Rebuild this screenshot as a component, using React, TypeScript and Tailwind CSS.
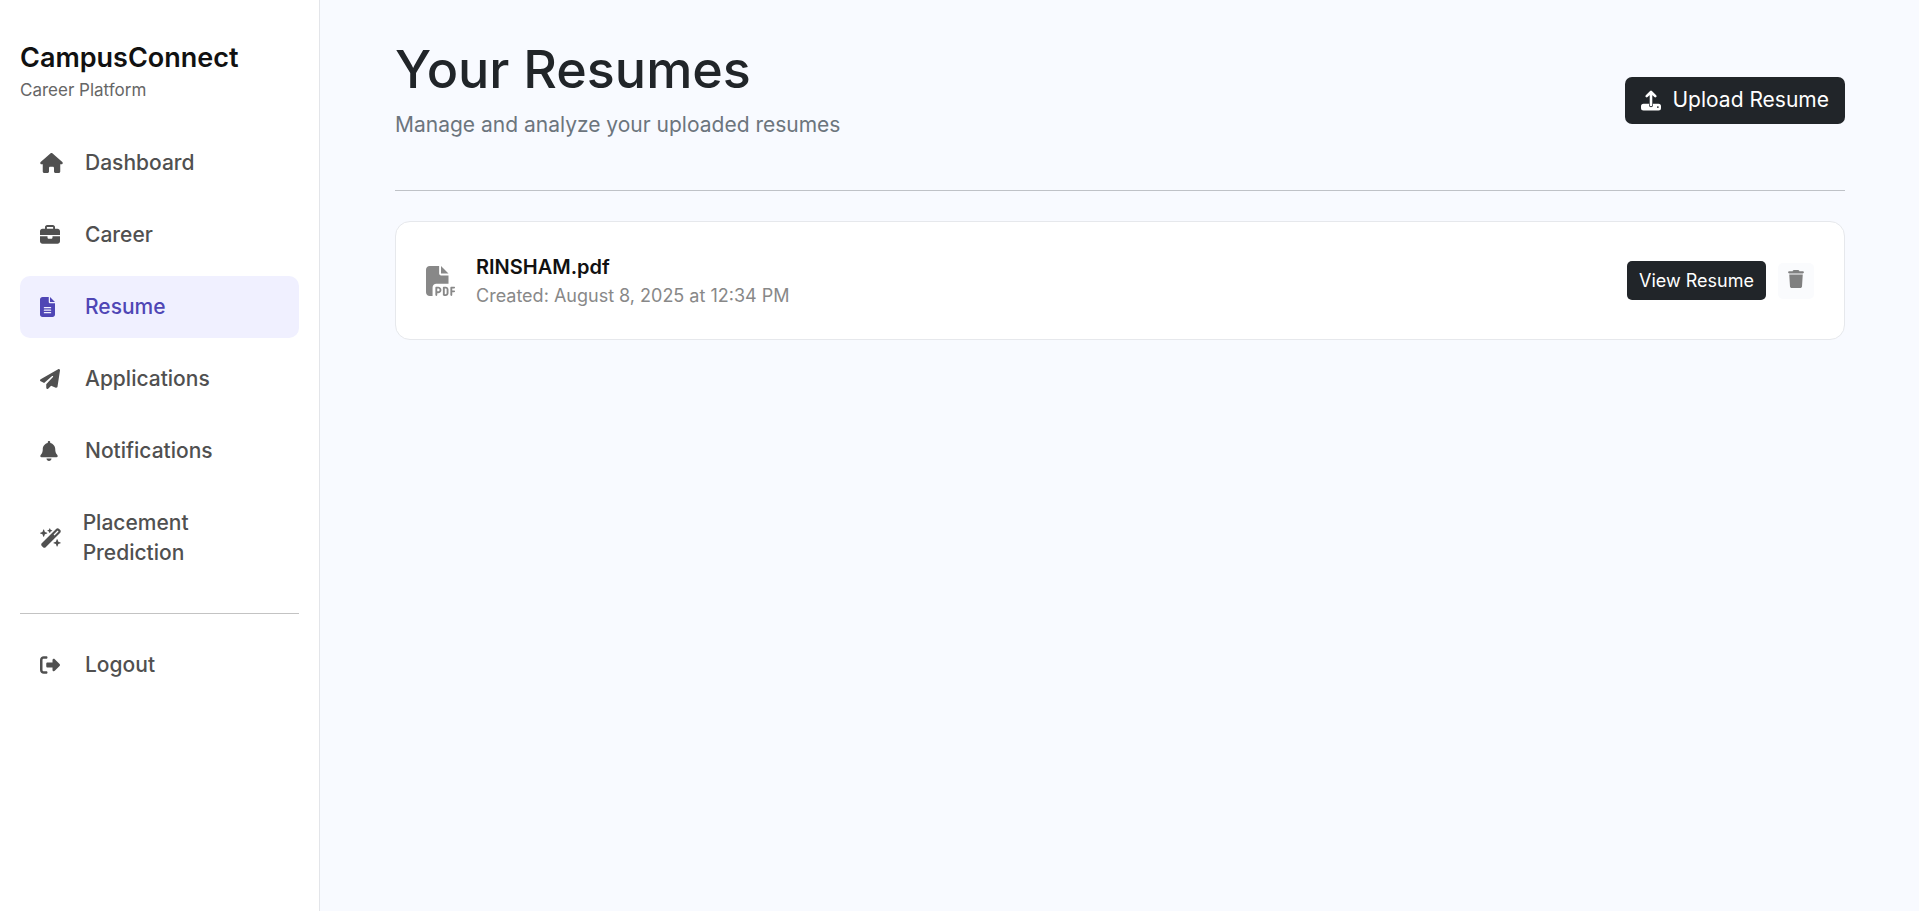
import type { IconType } from "react-icons";
import {
  FaBell,
  FaBriefcase,
  FaFileLines,
  FaFilePdf,
  FaHouse,
  FaPaperPlane,
  FaRightFromBracket,
  FaTrash,
  FaWandMagicSparkles,
} from "react-icons/fa6";

type NavItem = { label: string; icon: IconType; iconWidth: string; active?: boolean };

const navItems: NavItem[] = [
  { label: "Dashboard", icon: FaHouse, iconWidth: "w-[23px]" },
  { label: "Career", icon: FaBriefcase, iconWidth: "w-5" },
  { label: "Resume", icon: FaFileLines, iconWidth: "w-[15px]", active: true },
  { label: "Applications", icon: FaPaperPlane, iconWidth: "w-5" },
  { label: "Notifications", icon: FaBell, iconWidth: "w-[18px]" },
  { label: "Placement Prediction", icon: FaWandMagicSparkles, iconWidth: "w-[22px]" },
];

function UploadIcon() {
  return (
    <svg viewBox="0 0 512 512" className="h-[21px] w-5" fill="currentColor" aria-hidden="true">
      <path
        d="M256 48v320M146 146L256 38l110 108"
        fill="none"
        stroke="currentColor"
        strokeWidth="66"
        strokeLinecap="round"
        strokeLinejoin="round"
      />
      <path
        fillRule="evenodd"
        d="M64 338H206V376a50 50 0 0 0 100 0V338H448a64 64 0 0 1 64 64v46a64 64 0 0 1-64 64H64a64 64 0 0 1-64-64v-46a64 64 0 0 1 64-64zM432 402a23 23 0 1 0 0 46 23 23 0 1 0 0-46z"
      />
    </svg>
  );
}

function NavLink({ label, icon: Icon, iconWidth, active }: NavItem) {
  return (
    <a
      href="#"
      aria-current={active ? "page" : undefined}
      className={`flex items-center rounded-[10px] px-5 py-4 text-[21px] leading-[30px] font-medium ${
        active ? "bg-[#f0f0ff] text-[#4f46b5]" : "text-[#505050]"
      }`}
    >
      <span className="mr-[15px] flex w-[30px]">
        <Icon className={`h-5 shrink-0 ${iconWidth}`} />
      </span>
      <span>{label}</span>
    </a>
  );
}

export default function App() {
  return (
    <div className="flex min-h-screen bg-[#f8faff] font-['Inter',sans-serif] text-[#212529]">
      <aside className="w-80 shrink-0 border-r border-[#e3e5e9] bg-white px-5 pt-10">
        <div className="mb-7">
          <p className="text-[27px] leading-9 font-semibold text-[#111111]">CampusConnect</p>
          <p className="text-[17px] leading-7 text-[#666666]">Career Platform</p>
        </div>
        <nav aria-label="Main" className="flex flex-col gap-[10px]">
          {navItems.map((item) => (
            <NavLink key={item.label} {...item} />
          ))}
        </nav>
        <hr className="mt-[29px] mb-5 border-[#c3c3c3]" />
        <NavLink label="Logout" icon={FaRightFromBracket} iconWidth="w-5" />
      </aside>

      <main className="min-w-0 flex-1 pt-10 pr-[74px] pl-[75px]">
        <header className="flex items-center justify-between border-b border-[#bfc2c7] pb-[30px]">
          <div className="pb-5">
            <h1 className="text-[52px] leading-[60px] font-medium">Your Resumes</h1>
            <p className="mt-[10px] text-[21px] leading-[30px] text-[#6c757d]">
              Manage and analyze your uploaded resumes
            </p>
          </div>
          <button
            type="button"
            className="flex h-[47px] items-center gap-[11px] rounded-[7px] bg-[#212529] px-4 text-[21px] text-white"
          >
            <UploadIcon />
            Upload Resume
          </button>
        </header>

        <article className="mt-[30px] flex h-[119px] items-center rounded-[15px] border border-[#e6e8ec] bg-white px-[30px]">
          <FaFilePdf className="size-[30px] shrink-0 text-[#888888]" />
          <div className="ml-5 flex-1">
            <h2 className="text-xl leading-[30px] font-semibold text-[#111111]">RINSHAM.pdf</h2>
            <p className="text-lg leading-7 text-[#888888]">Created: August 8, 2025 at 12:34 PM</p>
          </div>
          <button
            type="button"
            className="h-[39px] rounded-[5px] bg-[#212529] px-3 text-lg text-white"
          >
            View Resume
          </button>
          <button
            type="button"
            aria-label="Delete resume"
            className="ml-3 flex size-9 items-center justify-center rounded-[5px] bg-[#fafbfd] pb-1 text-[#808080]"
          >
            <FaTrash className="size-[18px]" />
          </button>
        </article>
      </main>
    </div>
  );
}
